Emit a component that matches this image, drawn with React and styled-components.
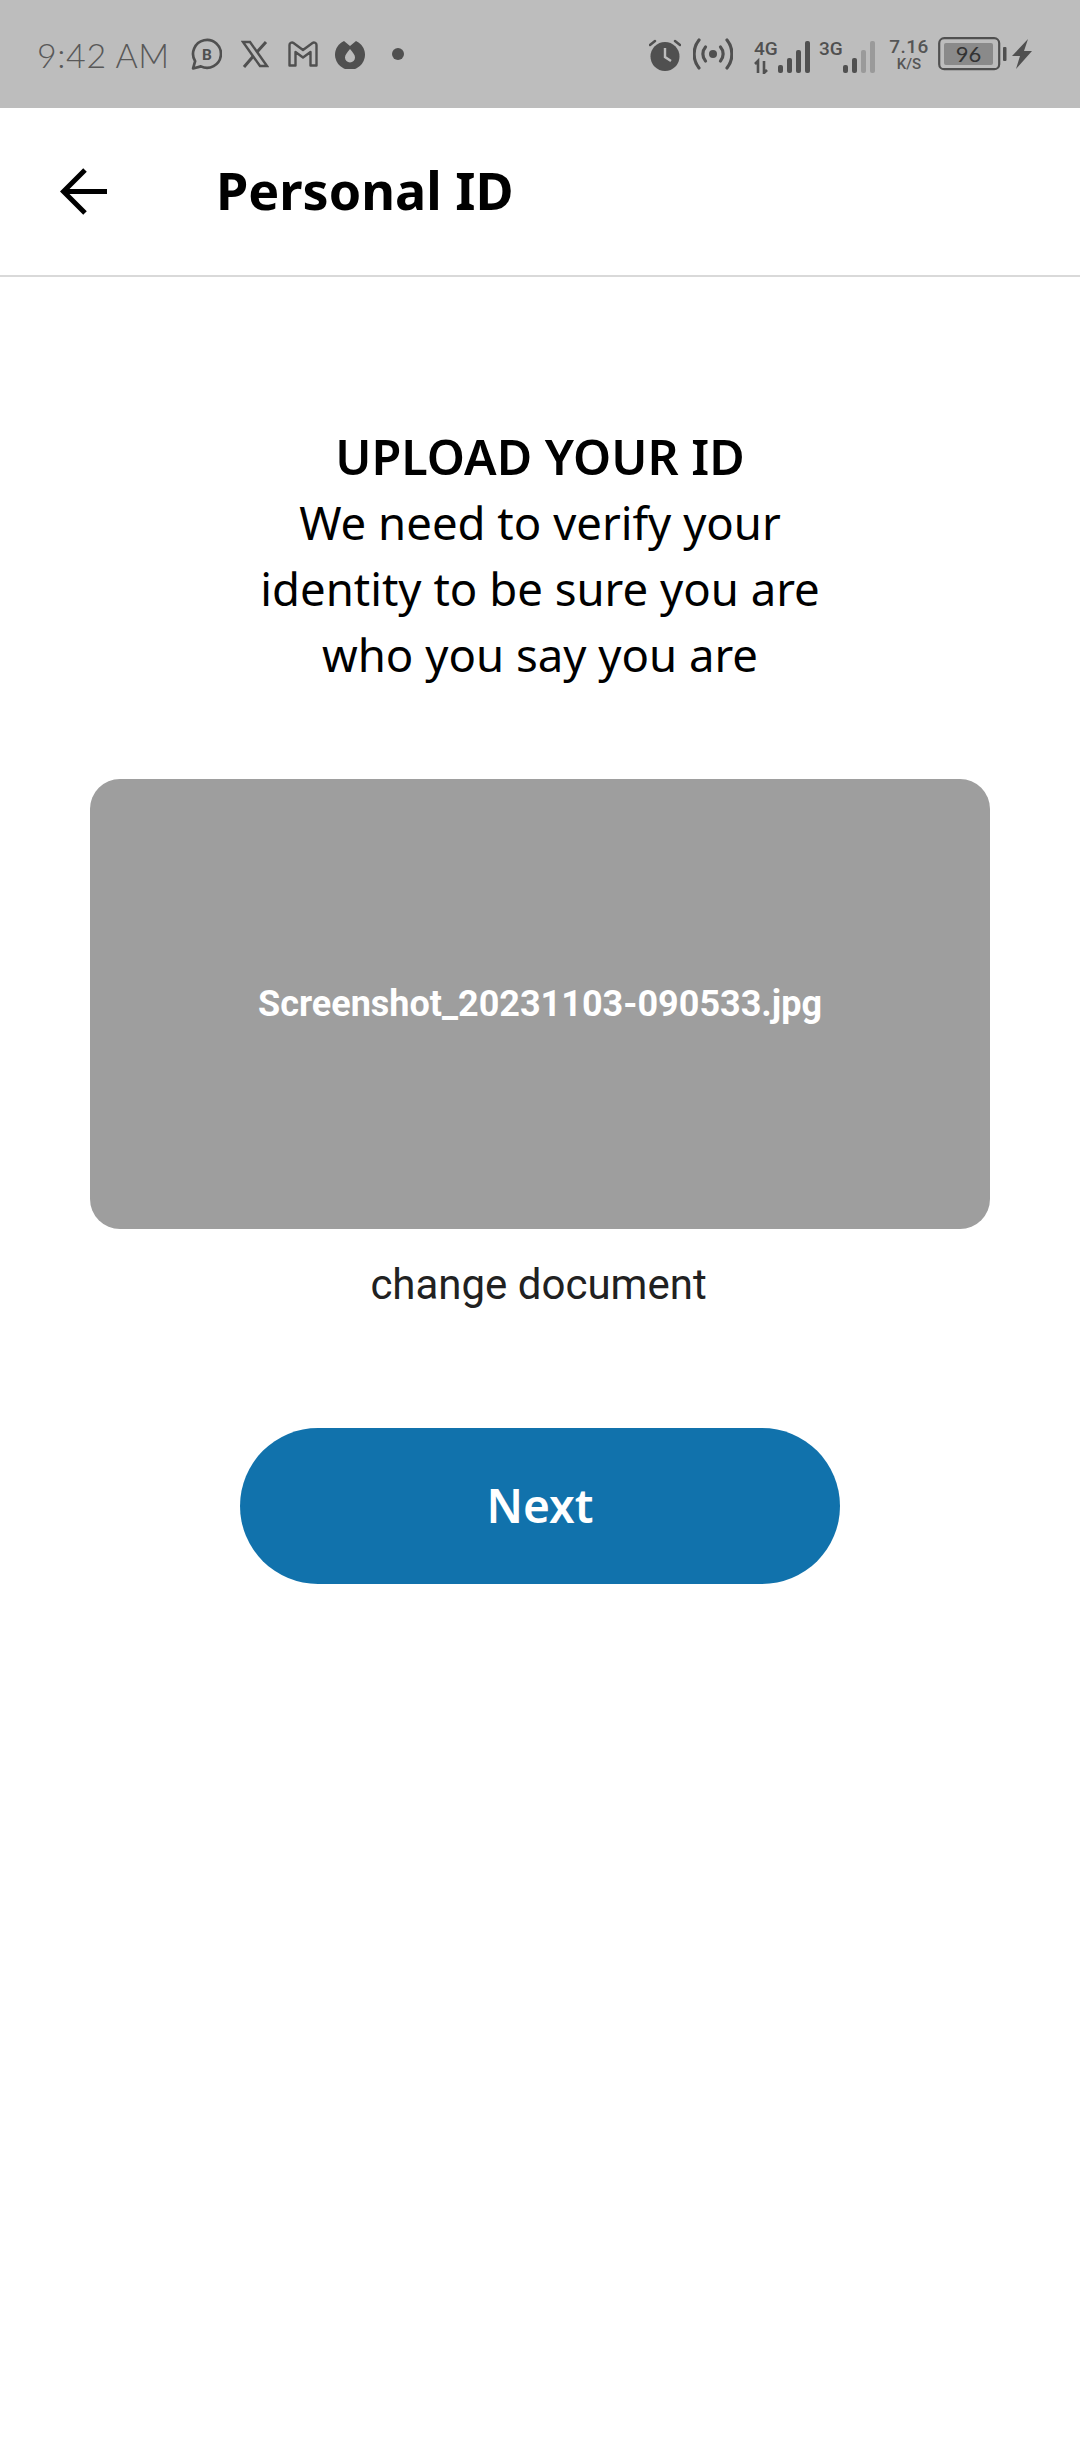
import React from "react";
import styled, { createGlobalStyle } from "styled-components";

const Global = createGlobalStyle`
  html, body { margin: 0; padding: 0; background: #fff; }
  body { font-family: "Noto Sans", sans-serif; }
  * { box-sizing: border-box; }
`;

const Page = styled.div`
  width: 1080px;
  height: 2460px;
  background: #fff;
  display: flex;
  flex-direction: column;
  overflow: hidden;
`;

const StatusBar = styled.div`
  height: 108px;
  background: #bdbdbd;
  color: #505050;
  display: flex;
  align-items: center;
  justify-content: space-between;
  padding: 0 47px 0 37px;
`;

const StatusGroup = styled.div`
  display: flex;
  align-items: center;
  gap: ${(p) => p.$gap}px;
`;

const Clock = styled.span`
  font-family: "Lato", sans-serif;
  font-weight: 300;
  font-size: 34px;
  letter-spacing: 0.6px;
  color: #585858;
  margin-right: 2px;
  white-space: nowrap;
`;

const Speed = styled.div`
  width: 40px;
  display: flex;
  flex-direction: column;
  align-items: center;
  font-family: "Roboto", sans-serif;
  font-weight: 500;
  line-height: 1;
  color: #555;
  margin-left: 14px;
`;
const SpeedValue = styled.span`
  font-size: 19px;
  letter-spacing: 0.5px;
`;
const SpeedUnit = styled.span`
  font-size: 15px;
  margin-top: 1px;
`;

const Header = styled.header`
  height: 169px;
  border-bottom: 2px solid #d9d9d9;
  display: flex;
  align-items: center;
  padding: 0 0 4px 60px;
`;

const BackButton = styled.button`
  width: 48px;
  height: 48px;
  padding: 0;
  border: 0;
  background: none;
  margin: 4px 108px 0 0;
  display: flex;
`;

const Title = styled.h1`
  margin: 0;
  font-family: "Noto Sans", sans-serif;
  font-weight: 700;
  font-size: 52px;
  line-height: 1;
  color: #000;
`;

const Content = styled.main`
  display: flex;
  flex-direction: column;
  align-items: center;
  padding: 146px 90px 0;
`;

const Intro = styled.div`
  text-align: center;
  font-family: "Noto Sans", sans-serif;
  font-weight: 400;
  font-size: 45.5px;
  line-height: 66px;
  color: #000;
`;

const IntroHeading = styled.div`
  font-weight: 600;
  font-size: 48.5px;
`;

const Card = styled.div`
  width: 900px;
  height: 450px;
  margin-top: 92px;
  background: #9e9e9e;
  border-radius: 30px;
  display: flex;
  align-items: center;
  justify-content: center;
  font-family: "Roboto", sans-serif;
  font-weight: 700;
  font-size: 36px;
  color: #fff;
`;

const ChangeLink = styled.div`
  margin: 28px 3px 0 0;
  font-family: "Roboto", sans-serif;
  font-size: 42px;
  line-height: 56px;
  color: #212121;
`;

const NextButton = styled.button`
  width: 600px;
  height: 156px;
  margin-top: 115px;
  padding: 0 0 3px;
  border: 0;
  border-radius: 78px;
  background: #1172ac;
  color: #fff;
  font-family: "Noto Sans", sans-serif;
  font-weight: 600;
  font-size: 46px;
`;

const Ico = styled.svg`
  display: block;
  flex: none;
  margin-left: ${(p) => p.$ml || 0}px;
`;

const Whatsapp = () => (
  <Ico width="31" height="32" viewBox="0 0 30 31" fill="none" stroke="#505050" strokeWidth="2.600">
    <path d="M2 29.500l2-7A13.500 13.500 0 1 1 9.500 27.500z" strokeLinejoin="round" />
    <text x="15.500" y="21" textAnchor="middle" fontFamily="Roboto, sans-serif" fontWeight="700" fontSize="15" fill="#505050" stroke="none">B</text>
  </Ico>
);
const XLogo = () => (
  <Ico width="28" height="28" viewBox="0 0 28 28" fill="none" stroke="#505050" strokeWidth="2.400">
    <path d="M2 2h7l17 24h-7z" />
    <path d="M25 2L16 12M12 16.500L3 27" strokeWidth="3" />
  </Ico>
);
const Gmail = () => (
  <Ico width="30" height="26" viewBox="0 0 30 26" fill="none" stroke="#505050" strokeWidth="2.400" strokeLinejoin="round">
    <path d="M1.500 4a2.500 2.500 0 0 1 4-2L15 9l9.500-7a2.500 2.500 0 0 1 4 2v20.500h-6V11L15 16.500 7.500 11v13.500h-6z" />
  </Ico>
);
const Drop = () => (
  <Ico width="30" height="29" viewBox="0 0 30 29" fill="#505050" $ml={-2}>
    <path fillRule="evenodd" d="M9 1l6 5 6-5a15 15 0 1 1-12 0zM15 9c-3 3.500-5 6-5 8.500a5 5 0 0 0 10 0C20 15 18 12.500 15 9z" />
  </Ico>
);
const Dot = () => (
  <Ico width="12" height="12" viewBox="0 0 12 12" fill="#505050" $ml={8}>
    <circle cx="6" cy="6" r="6" />
  </Ico>
);
const Alarm = () => (
  <Ico width="32" height="33" viewBox="0 0 32 33" fill="#505050">
    <circle cx="16" cy="18.500" r="14.500" />
    <path d="M16 10v9l6 4" fill="none" stroke="#bdbdbd" strokeWidth="2.400" />
    <path d="M1 7l5-4M31 7l-5-4" fill="none" stroke="#505050" strokeWidth="2.500" strokeLinecap="round" />
  </Ico>
);
const Hotspot = () => (
  <Ico width="40" height="32" viewBox="0 0 40 32" fill="none" stroke="#505050" strokeWidth="3.200" strokeLinecap="round" $ml={12}>
    <circle cx="20" cy="16" r="4" fill="#505050" stroke="none" />
    <path d="M12.500 9c-3.500 4-3.500 10 0 14M27.500 9c3.500 4 3.500 10 0 14" />
    <path d="M6 2C-.5 10-.5 22 6 30M34 2c6.500 8 6.500 20 0 28" />
  </Ico>
);
const Signal = ({ label, arrows, bars, active, ml }) => (
  <Ico width="56" height="40" viewBox="0 -6 56 40" $ml={ml}>
    <text x="0" y="15" fontFamily="Roboto, sans-serif" fontWeight="500" fontSize="19" fill="#505050">{label}</text>
    {arrows && (
      <path d="M4 33V21l-3 3M10 21v12l3-3" fill="none" stroke="#505050" strokeWidth="2.600" />
    )}
    {bars.map((h, i) => (
      <rect key={i} x={24 + i * 9} y={33 - h} width="5" height={h} rx="2" fill={i < active ? "#505050" : "#9a9a9a"} />
    ))}
  </Ico>
);
const Battery = () => (
  <Ico width="69" height="34" viewBox="0 0 69 34" $ml={9}>
    <rect x="1.200" y="1.200" width="60" height="31" rx="5" fill="none" stroke="#505050" strokeWidth="2.200" />
    <rect x="6" y="6" width="49" height="22" rx="2" fill="#8a8a8a" />
    <rect x="65" y="10" width="3.500" height="14" rx="1" fill="#505050" />
    <text x="30.500" y="25" textAnchor="middle" fontFamily="Lato, sans-serif" fontSize="22" fill="#333">96</text>
  </Ico>
);
const Bolt = () => (
  <Ico width="22" height="30" viewBox="0 0 22 30" fill="#505050" $ml={4}>
    <path d="M17 0L1 17h8L5 30l16-18h-8z" />
  </Ico>
);

const BackArrow = () => (
  <svg width="48" height="48" viewBox="0 0 48 48" fill="none" stroke="#000" strokeWidth="5">
    <path d="M47 23.500H3M25 2L3.500 23.500 25 45" />
  </svg>
);

export default function App() {
  return (
    <Page>
      <Global />
      <StatusBar>
        <StatusGroup $gap={19}>
          <Clock>9:42 AM</Clock>
          <Whatsapp />
          <XLogo />
          <Gmail />
          <Drop />
          <Dot />
        </StatusGroup>
        <StatusGroup $gap={0}>
          <Alarm />
          <Hotspot />
          <Signal label="4G" arrows bars={[8, 15, 23, 32]} active={4} ml={21} />
          <Signal label="3G" bars={[8, 15, 23, 32]} active={2} ml={9} />
          <Speed>
            <SpeedValue>7.16</SpeedValue>
            <SpeedUnit>K/S</SpeedUnit>
          </Speed>
          <Battery />
          <Bolt />
        </StatusGroup>
      </StatusBar>
      <Header>
        <BackButton aria-label="Back"><BackArrow /></BackButton>
        <Title>Personal ID</Title>
      </Header>
      <Content>
        <Intro>
          <IntroHeading>UPLOAD YOUR ID</IntroHeading>
          <div>We need to verify your</div>
          <div>identity to be sure you are</div>
          <div>who you say you are</div>
        </Intro>
        <Card>Screenshot_20231103-090533.jpg</Card>
        <ChangeLink>change document</ChangeLink>
        <NextButton>Next</NextButton>
      </Content>
    </Page>
  );
}
